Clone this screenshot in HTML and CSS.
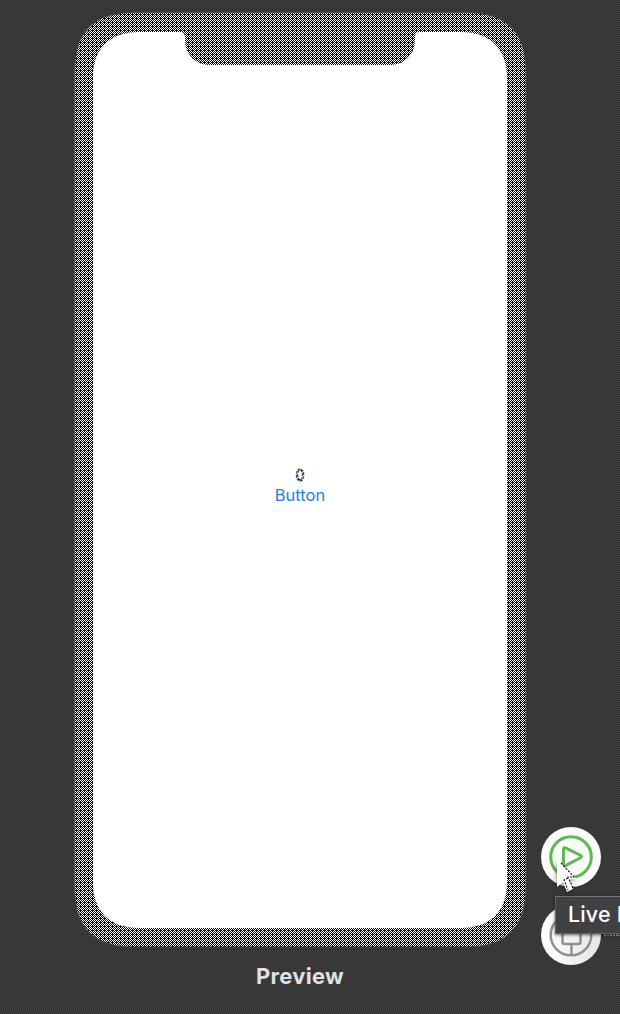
FILE: index.html
```html
<!DOCTYPE html>
<html lang="en">
<head>
<meta charset="utf-8">
<title>Preview</title>
<link rel="stylesheet" href="styles.css">
</head>
<body>
<main class="canvas">
  <section class="device">
    <svg class="frame" viewBox="0 0 452 935" aria-hidden="true">
      <defs>
        <pattern id="dither" width="4" height="4" patternUnits="userSpaceOnUse" shape-rendering="crispEdges">
          <rect width="4" height="4" fill="#000"/>
          <path fill="#fff" d="M0 0h1v1H0zM2 0h1v1H2zM1 1h1v1H1zM3 1h1v1H3zM0 2h1v1H0zM1 3h1v1H1zM3 3h1v1H3z"/>
        </pattern>
      </defs>
      <path class="bezel" d="M62 .5H390C433 .5 452 19 452 62V873C452 916 433 935 390 935H62C19 935 .5 916 .5 873V62C.5 19 19 .5 62 .5Z"/>
      <path class="screen" d="M66 20H106Q111 20 111 25V28C111 43 122 53 136 53H316C330 53 341 43 341 28V25Q341 20 346 20H386C417 20 433 37 433 66V870C433 899 417 916 386 916H66C35 916 19 899 19 870V66C19 37 35 20 66 20Z"/>
    </svg>
    <div class="content">
      <svg class="count" viewBox="0 0 12 16"><text x="1.500" y="14" textLength="9" lengthAdjust="spacingAndGlyphs">0</text></svg>
      <button class="link">Button</button>
    </div>
  </section>
  <h1 class="caption">Preview</h1>
  <nav class="controls">
    <button class="round live" aria-label="Live Preview">
      <svg viewBox="0 0 60 60"><circle cx="30" cy="30" r="20.300"/><path d="M22.500 22.500Q22.500 20 25 21.200L39 28Q42 29.500 39 31L25 38.300Q22.500 39.500 22.500 37Z"/></svg>
    </button>
    <button class="round inspect" aria-label="Preview on Device">
      <svg viewBox="0 0 60 60"><circle cx="30" cy="30" r="20.300"/><rect x="21.500" y="17" width="18" height="22" rx="2"/><path d="M30.500 39v11"/></svg>
    </button>
  </nav>
  <svg class="hint" viewBox="0 0 16 5" aria-hidden="true"><path d="M1 1v2M4 2v1M7 1v2M10 1v2M13 1v2M15 2v1"/></svg>
  <div class="tooltip">Live Preview</div>
  <svg class="cursor" viewBox="0 0 22 34" aria-hidden="true">
    <path class="arrow" d="M1 0V27L7 22L11 32L17 29L13 19H21Z"/>
    <path class="dots" d="M5 3L18 17H12L17 28M12 18L8 20L12 30"/>
  </svg>
</main>
</body>
</html>
```

FILE: styles.css
```css
* { box-sizing: border-box; }
body { margin: 0; }
button { border: 0; padding: 0; font: inherit; }
.canvas {
  position: relative;
  width: 620px;
  height: 1014px;
  padding: 12px 0 0 74px;
  overflow: hidden;
  background: repeating-conic-gradient(#303030 0 25%, #404040 0 50%) 0 0 / 2px 2px;
  font-family: Inter, Roboto, sans-serif;
}
.device { position: relative; width: 452px; height: 935px; }
.frame { display: block; width: 452px; height: 935px; overflow: visible; }
.bezel { fill: url(#dither); stroke: #505050; stroke-width: .6; }
.screen { fill: #fff; }
.content {
  position: absolute;
  inset: 0;
  display: flex;
  flex-direction: column;
  align-items: center;
  padding-top: 455px;
}
.count { width: 12px; height: 16px; overflow: visible; }
.count text { fill: #fff; stroke: #000; stroke-width: .9; stroke-dasharray: 3 1; font: 16px Inter, sans-serif; }
.link { margin-top: 2px; background: none; color: #2582e2; font-size: 16.500px; line-height: 21px; letter-spacing: 0; }
.caption {
  width: 452px;
  margin: 15px 0 0;
  color: #dfe0e2;
  font-size: 22px;
  font-weight: 700;
  line-height: 28px;
  letter-spacing: .25px;
  text-align: center;
}
.controls { position: absolute; left: 541px; top: 827px; display: grid; gap: 18px; }
.round { width: 60px; height: 60px; border-radius: 50%; background: #fbfbfc; }
.round svg { display: block; width: 60px; height: 60px; fill: none; stroke-width: 3; }
.live svg { stroke: #60b84f; }
.inspect { background: linear-gradient(90deg, #fff, #e4e5e8); }
.inspect svg { stroke: #8f9095; stroke-width: 2.500; }
.hint { position: absolute; left: 604px; top: 933px; width: 16px; height: 5px; fill: none; stroke: #eee; }
.tooltip {
  position: absolute;
  left: 555px;
  top: 896px;
  width: 140px;
  height: 38px;
  padding-left: 12px;
  border: 1px solid #606064;
  border-top-color: #737379;
  background: #414144;
  box-shadow: 0 1px 3px #0009;
  color: #fff;
  font-size: 21.500px;
  font-weight: 500;
  letter-spacing: .15px;
  line-height: 35px;
  white-space: nowrap;
}
.cursor { position: absolute; left: 556px; top: 860px; width: 22px; height: 34px; filter: drop-shadow(-1px 2px 2px #0005); }
.arrow { fill: #fff; }
.dots { fill: none; stroke: #000; stroke-width: 1.100; stroke-dasharray: 2 1.500; }
```
